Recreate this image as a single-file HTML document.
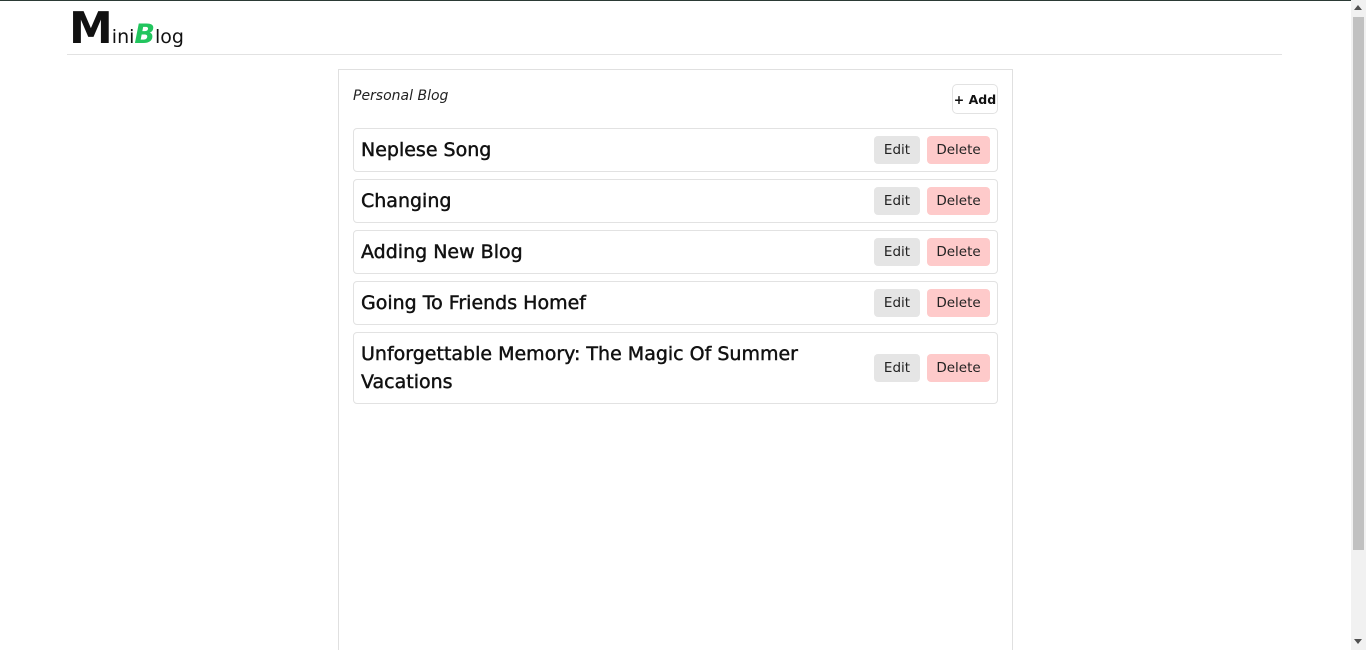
<!DOCTYPE html>
<html><head><meta charset="utf-8"><style>
*{box-sizing:border-box;margin:0;padding:0}
html,body{width:1366px;height:650px;overflow:hidden;background:#fff;font-family:"DejaVu Sans","Liberation Sans",sans-serif;color:#111}
.topline{position:absolute;left:0;top:0;width:1366px;height:1px;background:#2b3a35}
.logo{position:absolute;left:69px;top:3px;white-space:nowrap}
.logo .M{font-size:44px;font-weight:bold;color:#111;letter-spacing:-1px}
.logo .s{font-size:19px;color:#111}
.logo .B{font-size:27px;font-weight:bold;font-style:italic;color:#22c55e}
.hr{position:absolute;left:67px;top:54px;width:1215px;height:1px;background:#e2e2e2}
.box{position:absolute;left:338px;top:69px;width:675px;height:581px;border:1px solid #e0e0e0;border-bottom:none}
.pb{position:absolute;left:14px;top:18px;font-style:italic;font-size:14px;color:#222}
.add{position:absolute;left:613px;top:14px;width:46px;height:30px;border:1px solid #e2e2e2;border-radius:5px;font-weight:bold;font-size:12.5px;display:flex;align-items:center;justify-content:center;white-space:nowrap}
.row{position:absolute;left:14px;width:645px;border:1px solid #e2e2e2;border-radius:4px;display:flex;align-items:center;padding:0 7px}
.row .t{flex:1;font-size:19px;line-height:28px;color:#111;-webkit-text-stroke:0.45px #111}
.btn{height:28px;border-radius:4px;font-size:13.5px;display:flex;align-items:center;justify-content:center;color:#222}
.e{width:46px;background:#e5e5e5;margin-right:7px}
.d{width:63px;background:#fecaca}
.sb{position:absolute;left:1351px;top:0;width:15px;height:650px;background:#f1f1f1}
.th{position:absolute;left:1353px;top:17px;width:11px;height:533px;background:#c1c1c1}
.up{position:absolute;left:1354px;top:5px;width:0;height:0;border-left:4px solid transparent;border-right:4px solid transparent;border-bottom:5px solid #505050}
.dn{position:absolute;left:1354px;top:639px;width:0;height:0;border-left:4px solid transparent;border-right:4px solid transparent;border-top:5px solid #505050}
</style></head><body>
<div class="topline"></div>
<div class="logo"><span class="M">M</span><span class="s">ini</span><span class="B">B</span><span class="s">log</span></div>
<div class="hr"></div>
<div class="box">
<div class="pb">Personal Blog</div>
<div class="add">+ Add</div>
<div class="row" style="top:58px;height:44px"><div class="t">Neplese Song</div><div class="btn e">Edit</div><div class="btn d">Delete</div></div>
<div class="row" style="top:109px;height:44px"><div class="t">Changing</div><div class="btn e">Edit</div><div class="btn d">Delete</div></div>
<div class="row" style="top:160px;height:44px"><div class="t">Adding New Blog</div><div class="btn e">Edit</div><div class="btn d">Delete</div></div>
<div class="row" style="top:211px;height:44px"><div class="t">Going To Friends Homef</div><div class="btn e">Edit</div><div class="btn d">Delete</div></div>
<div class="row" style="top:262px;height:72px"><div class="t" style="padding-right:40px">Unforgettable Memory: The Magic Of Summer Vacations</div><div class="btn e">Edit</div><div class="btn d">Delete</div></div>
</div>
<div class="sb"></div><div class="th"></div><div class="up"></div><div class="dn"></div>
</body></html>
